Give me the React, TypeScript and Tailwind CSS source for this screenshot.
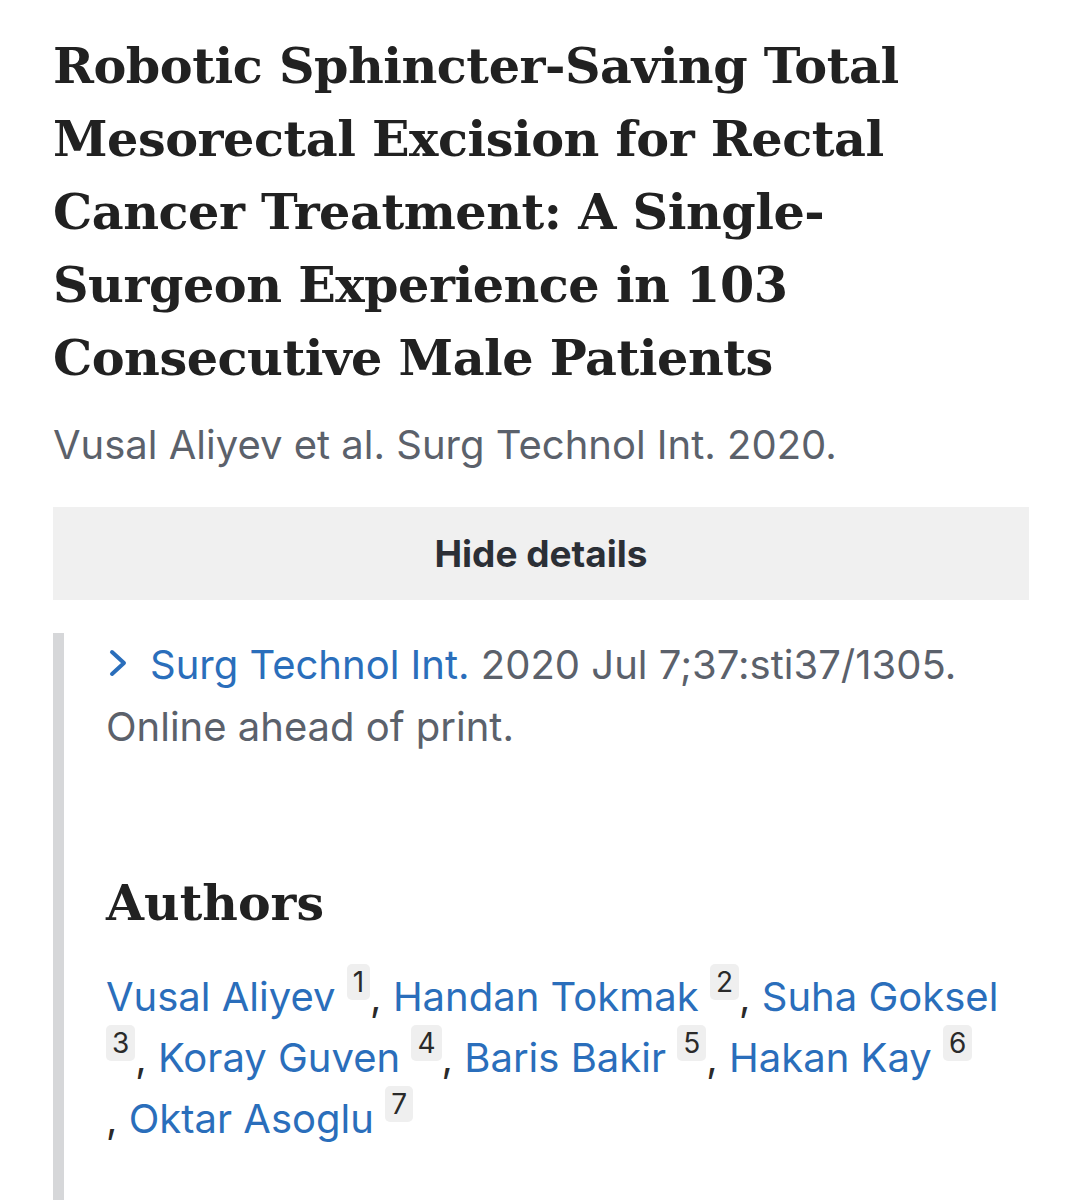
import React from "react";

const sans = { fontFamily: "Inter, 'Liberation Sans', sans-serif" };
const serif = { fontFamily: "'DejaVu Serif', 'Liberation Serif', serif" };

function Sup({ n }: { n: string }) {
  return (
    <span className="inline-block align-top mt-[-2px] px-[6px] rounded-[5px] bg-[#efefef] text-[#2a2a2a] text-[28px] leading-[36px]">
      {n}
    </span>
  );
}

export default function App() {
  const authors = [
    ["Vusal Aliyev", "1"],
    ["Handan Tokmak", "2"],
    ["Suha Goksel", "3"],
    ["Koray Guven", "4"],
    ["Baris Bakir", "5"],
    ["Hakan Kay", "6"],
    ["Oktar Asoglu", "7"],
  ];
  return (
    <div className="w-[1082px] h-[1200px] bg-white overflow-hidden pl-[53px] pr-[53px] pt-[30px]">
      <h1 className="text-[#212121] font-bold text-[49.3px] leading-[73px] tracking-[-0.5px]" style={serif}>
        Robotic Sphincter-Saving Total Mesorectal Excision for Rectal Cancer Treatment: A Single-Surgeon Experience in 103 Consecutive Male Patients
      </h1>
      <p className="mt-[26px] text-[#5b616b] text-[40px] leading-[48px]" style={sans}>
        Vusal Aliyev et al. Surg Technol Int. 2020.
      </p>
      <div
        className="mt-[38px] h-[93px] bg-[#f0f0f0] flex items-center justify-center text-[#2b2f36] font-bold text-[37px]"
        style={sans}
      >
        Hide details
      </div>
      <div className="mt-[33px] border-l-[11px] border-[#d6d7d9] pl-[42px] pt-[1px] h-[600px]" style={sans}>
        <p className="text-[40px] leading-[62px] text-[#5b616b]">
          <span className="text-[#2a6ebb]">
            <svg className="inline-block align-baseline mr-[20px] mb-[2px]" width="24" height="28" viewBox="0 0 24 28" fill="none">
              <path d="M6 3 L18 14 L6 25" stroke="#2a6ebb" strokeWidth="4" strokeLinecap="round" strokeLinejoin="round" />
            </svg>
            Surg Technol Int.
          </span>{" "}
          2020 Jul 7;37:sti37/1305. Online ahead of print.
        </p>
        <h2 className="mt-[115px] text-[#212121] font-bold text-[49px] leading-[60px]" style={serif}>
          Authors
        </h2>
        <p className="mt-[33px] text-[40px] leading-[61px] text-[#2a2a2a]">
          {authors.map(([name, n], i) => (
            <React.Fragment key={name}>
              {i > 0 && ",\u00a0"}
              <span className="text-[#2a6ebb]">{name}</span> <Sup n={n} />
            </React.Fragment>
          ))}
        </p>
      </div>
    </div>
  );
}
